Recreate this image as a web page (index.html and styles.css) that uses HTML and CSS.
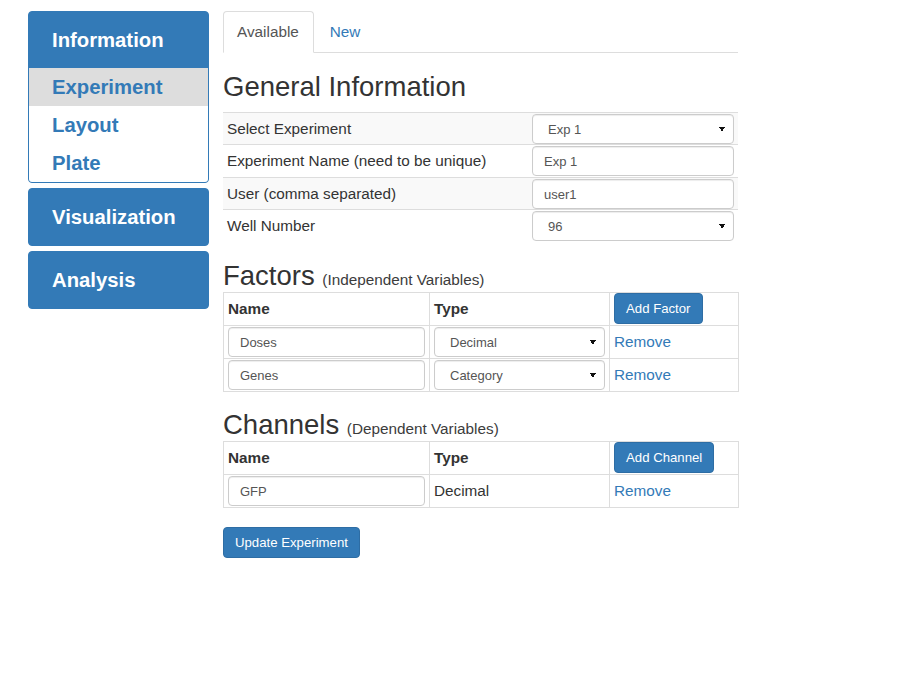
FILE: index.html
```html
<!DOCTYPE html>
<html>
<head>
<meta charset="utf-8">
<title>Experiment</title>
<link rel="stylesheet" href="styles.css">
</head>
<body>
<div class="page">
  <aside class="sidebar">
    <div class="panel">
      <div class="panel-head">Information</div>
      <ul class="panel-list">
        <li class="item active">Experiment</li>
        <li class="item">Layout</li>
        <li class="item">Plate</li>
      </ul>
    </div>
    <div class="panel"><div class="panel-head">Visualization</div></div>
    <div class="panel"><div class="panel-head">Analysis</div></div>
  </aside>
  <main class="main">
    <ul class="tabs">
      <li class="tab active">Available</li>
      <li class="tab">New</li>
    </ul>

    <h2 class="title title-first">General Information</h2>
    <table class="info">
      <tr>
        <td class="label">Select Experiment</td>
        <td class="ctl"><select class="field select"><option>Exp 1</option></select></td>
      </tr>
      <tr>
        <td class="label">Experiment Name (need to be unique)</td>
        <td class="ctl"><input class="field" type="text" value="Exp 1"></td>
      </tr>
      <tr>
        <td class="label">User (comma separated)</td>
        <td class="ctl"><input class="field" type="text" value="user1"></td>
      </tr>
      <tr>
        <td class="label">Well Number</td>
        <td class="ctl"><select class="field select"><option>96</option></select></td>
      </tr>
    </table>

    <h2 class="title title-fa">Factors <small class="sub">(Independent Variables)</small></h2>
    <table class="grid">
      <colgroup><col class="c-name"><col class="c-type"><col class="c-act"></colgroup>
      <tr>
        <th>Name</th>
        <th>Type</th>
        <th><button class="btn">Add Factor</button></th>
      </tr>
      <tr>
        <td><input class="field" type="text" value="Doses"></td>
        <td><select class="field select"><option>Decimal</option></select></td>
        <td><a class="link">Remove</a></td>
      </tr>
      <tr>
        <td><input class="field" type="text" value="Genes"></td>
        <td><select class="field select"><option>Category</option></select></td>
        <td><a class="link">Remove</a></td>
      </tr>
    </table>

    <h2 class="title title-ch">Channels <small class="sub">(Dependent Variables)</small></h2>
    <table class="grid">
      <colgroup><col class="c-name"><col class="c-type"><col class="c-act"></colgroup>
      <tr>
        <th>Name</th>
        <th>Type</th>
        <th><button class="btn">Add Channel</button></th>
      </tr>
      <tr>
        <td><input class="field" type="text" value="GFP"></td>
        <td class="plain">Decimal</td>
        <td><a class="link">Remove</a></td>
      </tr>
    </table>

    <div class="actions"><button class="btn">Update Experiment</button></div>
  </main>
</div>
</body>
</html>
```

FILE: styles.css
```css
html, body {
  margin: 0;
  padding: 0;
  background: #fff;
}
body {
  font-family: "Liberation Sans", Arial, sans-serif;
  font-size: 15.3px;
  color: #333;
}
.page {
  display: flex;
  gap: 14px;
  padding: 11px 0 0 28px;
  align-items: flex-start;
}
.sidebar {
  width: 181px;
  display: flex;
  flex-direction: column;
  gap: 5px;
}
.panel {
  background: #337ab7;
  border: 1px solid #337ab7;
  border-radius: 4px;
  overflow: hidden;
}
.panel-head {
  height: 56px;
  line-height: 56px;
  padding-left: 23px;
  color: #fff;
  font-weight: bold;
  font-size: 20.3px;
}
.panel-list {
  list-style: none;
  margin: 0;
  padding: 0;
  background: #fff;
}
.item {
  height: 38px;
  line-height: 38px;
  padding-left: 23px;
  color: #337ab7;
  font-weight: bold;
  font-size: 20.3px;
}
.item.active {
  background: #dddddd;
}
.main {
  width: 515px;
}
.tabs {
  display: flex;
  list-style: none;
  margin: 0;
  padding: 0;
  height: 42px;
  box-sizing: border-box;
  border-bottom: 1px solid #ddd;
}
.tab {
  box-sizing: border-box;
  height: 42px;
  line-height: 40px;
  padding: 0 14px 0 13px;
  margin-right: 2px;
  border: 1px solid transparent;
  border-radius: 4px 4px 0 0;
  color: #337ab7;
}
.tab.active {
  color: #555;
  background: #fff;
  border-color: #ddd #ddd transparent;
}
.title {
  font-size: 27.5px;
  font-weight: normal;
  line-height: 30px;
  margin: 20px 0 1px;
  color: #333;
}
.title-first {
  margin: 19px 0 10px;
}
.title-fa {
  margin-top: 20px;
}
.title-ch {
  margin-top: 18px;
}
.sub {
  font-size: 15.3px;
  line-height: 1;
  color: #3c3c3c;
}
.info {
  width: 515px;
  border-collapse: collapse;
}
.info td {
  border-top: 1px solid #ddd;
  padding: 1px 4px 0;
  vertical-align: middle;
}
.info tr:nth-child(odd) td {
  background: #f9f9f9;
}
.info tr:nth-child(2) td {
  padding-bottom: 1px;
}
.info .ctl {
  width: 202px;
}
.field {
  box-sizing: border-box;
  display: block;
  width: 100%;
  height: 30px;
  margin: 0;
  padding: 0 11px;
  border: 1px solid #ccc;
  border-radius: 4px;
  box-shadow: inset 0 1px 1px rgba(0, 0, 0, 0.075);
  background-color: #fff;
  font-family: "Liberation Sans", Arial, sans-serif;
  font-size: 13px;
  color: #555;
}
.select {
  -webkit-appearance: none;
  appearance: none;
  padding-left: 15px;
  background-image:
    linear-gradient(to top right, transparent 50%, #111 50%),
    linear-gradient(to bottom right, #111 50%, transparent 50%);
  background-size: 3px 5px, 3px 5px;
  background-position: right 11px center, right 8px center;
  background-repeat: no-repeat;
}
.grid {
  width: 515px;
  border-collapse: collapse;
  table-layout: fixed;
}
.c-name { width: 206px; }
.c-type { width: 180px; }
.c-act { width: 129px; }
.grid th,
.grid td {
  border: 1px solid #ddd;
  padding: 1px 4px;
  vertical-align: middle;
  text-align: left;
}
.grid th {
  font-weight: bold;
  padding: 0 4px 1px;
}
.grid .plain {
  color: #333;
}
.link {
  color: #337ab7;
  text-decoration: none;
}
.btn {
  box-sizing: border-box;
  height: 31px;
  padding: 0 11px;
  background: #337ab7;
  border: 1px solid #2e6da4;
  border-radius: 4px;
  color: #fff;
  font-family: "Liberation Sans", Arial, sans-serif;
  font-size: 13.2px;
  vertical-align: top;
}
.actions {
  margin-top: 19px;
}
```
